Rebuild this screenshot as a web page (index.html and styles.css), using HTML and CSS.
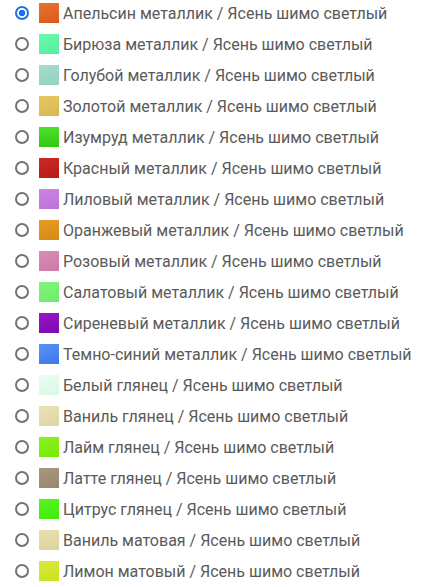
FILE: index.html
```html
<!DOCTYPE html>
<html lang="ru">
<head>
    <meta charset="UTF-8">
    <title>Цвет фасада</title>
    <link rel="stylesheet" href="styles.css">
</head>
<body>
    <ul class="color-list">
        <li class="color-item"><input type="radio" name="color" class="radio" checked><span class="swatch c-orange"></span><span class="color-name">Апельсин металлик / Ясень шимо светлый</span></li>
        <li class="color-item"><input type="radio" name="color" class="radio"><span class="swatch c-turquoise"></span><span class="color-name">Бирюза металлик / Ясень шимо светлый</span></li>
        <li class="color-item"><input type="radio" name="color" class="radio"><span class="swatch c-skyblue"></span><span class="color-name">Голубой металлик / Ясень шимо светлый</span></li>
        <li class="color-item"><input type="radio" name="color" class="radio"><span class="swatch c-gold"></span><span class="color-name">Золотой металлик / Ясень шимо светлый</span></li>
        <li class="color-item"><input type="radio" name="color" class="radio"><span class="swatch c-emerald"></span><span class="color-name">Изумруд металлик / Ясень шимо светлый</span></li>
        <li class="color-item"><input type="radio" name="color" class="radio"><span class="swatch c-red"></span><span class="color-name">Красный металлик / Ясень шимо светлый</span></li>
        <li class="color-item"><input type="radio" name="color" class="radio"><span class="swatch c-lilac"></span><span class="color-name">Лиловый металлик / Ясень шимо светлый</span></li>
        <li class="color-item"><input type="radio" name="color" class="radio"><span class="swatch c-amber"></span><span class="color-name">Оранжевый металлик / Ясень шимо светлый</span></li>
        <li class="color-item"><input type="radio" name="color" class="radio"><span class="swatch c-pink"></span><span class="color-name">Розовый металлик / Ясень шимо светлый</span></li>
        <li class="color-item"><input type="radio" name="color" class="radio"><span class="swatch c-salad"></span><span class="color-name">Салатовый металлик / Ясень шимо светлый</span></li>
        <li class="color-item"><input type="radio" name="color" class="radio"><span class="swatch c-violet"></span><span class="color-name">Сиреневый металлик / Ясень шимо светлый</span></li>
        <li class="color-item"><input type="radio" name="color" class="radio"><span class="swatch c-navy"></span><span class="color-name">Темно-синий металлик / Ясень шимо светлый</span></li>
        <li class="color-item"><input type="radio" name="color" class="radio"><span class="swatch c-white"></span><span class="color-name">Белый глянец / Ясень шимо светлый</span></li>
        <li class="color-item"><input type="radio" name="color" class="radio"><span class="swatch c-vanilla"></span><span class="color-name">Ваниль глянец / Ясень шимо светлый</span></li>
        <li class="color-item"><input type="radio" name="color" class="radio"><span class="swatch c-lime"></span><span class="color-name">Лайм глянец / Ясень шимо светлый</span></li>
        <li class="color-item"><input type="radio" name="color" class="radio"><span class="swatch c-latte"></span><span class="color-name">Латте глянец / Ясень шимо светлый</span></li>
        <li class="color-item"><input type="radio" name="color" class="radio"><span class="swatch c-citrus"></span><span class="color-name">Цитрус глянец / Ясень шимо светлый</span></li>
        <li class="color-item"><input type="radio" name="color" class="radio"><span class="swatch c-vanilla-matt"></span><span class="color-name">Ваниль матовая / Ясень шимо светлый</span></li>
        <li class="color-item"><input type="radio" name="color" class="radio"><span class="swatch c-lemon"></span><span class="color-name">Лимон матовый / Ясень шимо светлый</span></li>
    </ul>
</body>
</html>
```

FILE: styles.css
```css
body {
    margin: 0;
    background: #fff;
    font-family: Roboto, "Liberation Sans", sans-serif;
}
.color-list {
    list-style: none;
    margin: 0;
    padding: 0;
}
.color-item {
    display: flex;
    align-items: center;
    height: 26px;
    margin-bottom: 5px;
}
.radio {
    appearance: none;
    -webkit-appearance: none;
    box-sizing: border-box;
    width: 14px;
    height: 14px;
    margin: 0 10px 0 15px;
    border: 2px solid #737373;
    border-radius: 50%;
    background: #fff;
}
.radio:checked {
    border-color: #1a73e8;
    background: radial-gradient(circle, #1a73e8 0, #1a73e8 3px, #fff 3.5px);
}
.swatch {
    width: 20px;
    height: 20px;
    margin-right: 4px;
    flex-shrink: 0;
}
.color-name {
    font-size: 16px;
    color: #5a5a5a;
    white-space: nowrap;
}

.c-orange { background: linear-gradient(160deg, #e8742c, #d9581c); }
.c-turquoise { background: linear-gradient(160deg, #6cf8ac, #52f09c); }
.c-skyblue { background: linear-gradient(160deg, #a6dccd, #92d2c0); }
.c-gold { background: linear-gradient(160deg, #e6c866, #d8b84c); }
.c-emerald { background: linear-gradient(180deg, #52e030, #2ec80c); }
.c-red { background: linear-gradient(160deg, #cc2a24, #b81a16); }
.c-lilac { background: linear-gradient(160deg, #cc84e4, #bc70da); }
.c-amber { background: linear-gradient(160deg, #e89c28, #d68812); }
.c-pink { background: linear-gradient(160deg, #da8cb6, #cc7aa8); }
.c-salad { background: linear-gradient(160deg, #84f47c, #6cec68); }
.c-violet { background: linear-gradient(160deg, #9818c8, #7c08b0); }
.c-navy { background: linear-gradient(160deg, #5a92f4, #3c78ec); }
.c-white { background: linear-gradient(160deg, #e8fdf0, #daf8e6); }
.c-vanilla { background: linear-gradient(160deg, #ece2b8, #e0d4a6); }
.c-lime { background: linear-gradient(160deg, #8cf220, #76e808); }
.c-latte { background: linear-gradient(160deg, #a8987e, #968670); }
.c-citrus { background: linear-gradient(160deg, #58f420, #40ec08); }
.c-vanilla-matt { background: linear-gradient(160deg, #e8e0b2, #dcd29e); }
.c-lemon { background: linear-gradient(160deg, #dcea3a, #c8e020); }
```
